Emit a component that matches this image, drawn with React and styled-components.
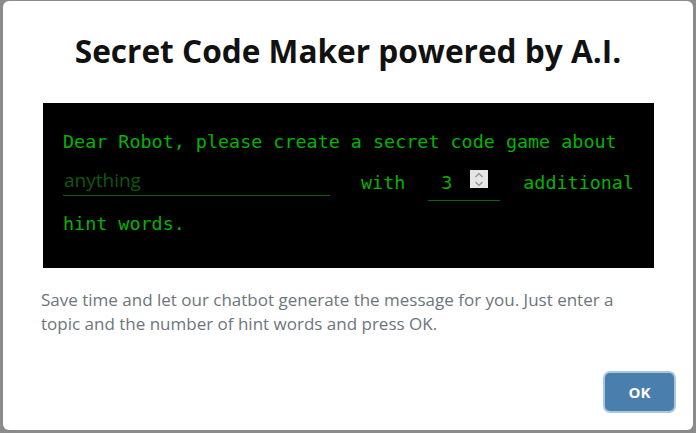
import styled, { createGlobalStyle } from 'styled-components'

const GlobalStyle = createGlobalStyle`
  html, body {
    margin: 0;
    padding: 0;
    height: 100%;
  }
  #root {
    height: 100%;
  }
`

const ChevronUp = () => (
  <svg width="10" height="6" viewBox="0 0 10 6">
    <path d="M1.5 5 L5 1.5 L8.5 5" fill="none" stroke="#8f8f8f" strokeWidth="1.2" />
  </svg>
)

const ChevronDown = () => (
  <svg width="10" height="6" viewBox="0 0 10 6">
    <path d="M1.5 1 L5 4.5 L8.5 1" fill="none" stroke="#8f8f8f" strokeWidth="1.2" />
  </svg>
)

export default function App() {
  return (
    <Backdrop>
      <GlobalStyle />
      <Modal>
        <Title>Secret Code Maker powered by A.I.</Title>
        <Body>
          <Terminal>
            <Line>Dear Robot, please create a secret code game about</Line>
            <InputRow>
              <TopicInput placeholder="anything" />
              <Word $gap={31}>with</Word>
              <NumberField>
                <NumberValue>3</NumberValue>
                <Spinner>
                  <ChevronUp />
                  <ChevronDown />
                </Spinner>
              </NumberField>
              <Word $gap={23}>additional</Word>
            </InputRow>
            <Line>hint words.</Line>
          </Terminal>
          <Description>
            Save time and let our chatbot generate the message for you. Just
            enter a topic and the number of hint words and press OK.
          </Description>
        </Body>
        <Footer>
          <OkButton>OK</OkButton>
        </Footer>
      </Modal>
    </Backdrop>
  )
}

const Backdrop = styled.div`
  display: flex;
  box-sizing: border-box;
  height: 100%;
  padding: 1px 4px 3px 3px;
  background: #8b8b8b;
`
const Modal = styled.div`
  flex: 1;
  display: flex;
  flex-direction: column;
  background: #ffffff;
  border-radius: 6px;
`
const Title = styled.h1`
  margin: 29px 0 0;
  font-family: 'Open Sans', sans-serif;
  font-weight: 700;
  font-size: 31.6px;
  line-height: 42px;
  text-align: center;
  color: #111111;
`
const Body = styled.div`
  padding: 31px 39px 0 38px;
`
const Terminal = styled.div`
  margin-left: 2px;
  padding: 18px 20px 24px;
  background: #000000;
  color: #00b400;
  font-family: 'DejaVu Sans Mono', 'Liberation Mono', monospace;
  font-size: 18.4px;
`
const Line = styled.div`
  line-height: 41px;
  white-space: nowrap;
`
const InputRow = styled.div`
  display: flex;
  align-items: center;
  height: 41px;
`
const TopicInput = styled.input`
  box-sizing: border-box;
  width: 267px;
  height: 26px;
  padding: 0 0 4px 1px;
  border: none;
  border-bottom: 1px solid #0d650d;
  background: transparent;
  outline: none;
  color: #00b400;
  font-family: 'Open Sans', sans-serif;
  font-size: 19px;
  &::placeholder {
    color: #0b5a0b;
  }
`
const Word = styled.span`
  margin-left: ${(p) => p.$gap}px;
  line-height: 41px;
`
const NumberField = styled.div`
  display: flex;
  align-items: center;
  box-sizing: border-box;
  width: 72px;
  height: 37px;
  margin-left: 23px;
  padding-left: 13px;
  border-bottom: 1px solid #0d650d;
`
const NumberValue = styled.span`
  width: 29px;
`
const Spinner = styled.div`
  display: flex;
  flex-direction: column;
  align-items: center;
  justify-content: center;
  gap: 3px;
  width: 18px;
  height: 18px;
  margin-top: -6px;
  background: #e6e6e6;
`
const Description = styled.p`
  margin: 20px 0 0;
  font-family: 'Open Sans', sans-serif;
  font-size: 17px;
  line-height: 24px;
  color: #6c757d;
`
const Footer = styled.div`
  display: flex;
  justify-content: flex-end;
  margin-top: auto;
  padding: 0 19px 19px;
`
const OkButton = styled.button`
  width: 69px;
  height: 38px;
  border: none;
  border-radius: 5px;
  background: #4a7fad;
  box-shadow: 0 0 0 2px #abc7e0;
  color: #ffffff;
  font-family: 'Open Sans', sans-serif;
  font-weight: 700;
  font-size: 15px;
`
